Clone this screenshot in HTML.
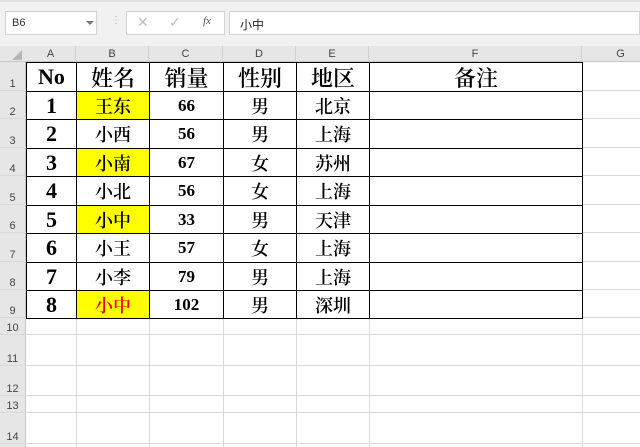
<!DOCTYPE html><html><head><meta charset="utf-8"><style>
*{margin:0;padding:0;box-sizing:border-box}
body{width:640px;height:447px;overflow:hidden;background:#fff;position:relative;font-family:"Liberation Sans",sans-serif}
.a{position:absolute}
.c{position:absolute;display:flex;align-items:center;justify-content:center}
.t{font-family:"Liberation Serif","Noto Serif CJK SC",serif;color:#000}
</style></head><body>
<div class="a" style="left:0;top:0;width:640px;height:46px;background:#f1f1f1"></div>
<div class="a" style="left:0;top:0;width:640px;height:2px;background:#e0e0e0"></div>
<div class="a" style="left:5px;top:11px;width:92px;height:24px;background:#fff;border:1px solid #d4d4d4;font-size:11px;color:#333;padding:5px 0 0 6px">B6</div>
<div class="a" style="left:86px;top:21px;width:0;height:0;border-left:4px solid transparent;border-right:4px solid transparent;border-top:4px solid #777"></div>
<div class="a" style="left:111px;top:15px;color:#aaa;font-size:10px">⋮</div>
<div class="a" style="left:126px;top:11px;width:99px;height:24px;background:#fff;border:1px solid #d4d4d4"></div>
<div class="a" style="left:137px;top:14px;color:#bbb;font-size:14px">✕</div>
<div class="a" style="left:169px;top:14px;color:#bbb;font-size:14px">✓</div>
<div class="a" style="left:203px;top:15px;color:#555;font-size:11px;font-style:italic;font-family:'Liberation Serif',serif">fx</div>
<div class="a" style="left:229px;top:11px;width:411px;height:24px;background:#fff;border:1px solid #d4d4d4;font-size:12px;color:#222;padding:4px 0 0 10px;font-family:'Liberation Sans','Noto Sans CJK SC',sans-serif">小中</div>
<div class="a" style="left:0;top:46px;width:640px;height:16px;background:#e6e6e6;border-bottom:1px solid #c6c6c6"></div>
<div class="a" style="left:0;top:62px;width:26px;height:385px;background:#e6e6e6;border-right:1px solid #c6c6c6"></div>
<div class="a" style="left:12px;top:50px;width:0;height:0;border-left:10px solid transparent;border-bottom:10px solid #b5b5b5"></div>
<div id="g"></div>
<script>
const cols=[26,76,149,223,296,369,582,660],rows=[62,91,119,148,176,205,233,262,290,318,335,366,396,413,444,460];
const L="ABCDEFG";let h="";
for(let i=0;i<7;i++){h+=`<div class="c" style="left:${cols[i]}px;top:46px;width:${cols[i+1]-cols[i]}px;height:16px;font-size:11px;color:#444;border-right:1px solid #d0d0d0">${L[i]}</div>`;}
for(let i=1;i<7;i++)h+=`<div class="a" style="left:${cols[i]}px;top:62px;width:1px;height:385px;background:#d9d9d9"></div>`;
for(let r=0;r<14;r++){h+=`<div class="a" style="left:0;top:${rows[r+1]-1}px;width:640px;height:1px;background:#d9d9d9"></div>`;
h+=`<div class="a" style="left:0;top:${rows[r]}px;width:25px;height:${rows[r+1]-rows[r]}px;font-size:11px;color:#444;display:flex;align-items:flex-end;justify-content:center;padding-bottom:1px">${r+1}</div>`;}
const d=[["No","姓名","销量","性别","地区","备注"],["1","王东","66","男","北京"],["2","小西","56","男","上海"],["3","小南","67","女","苏州"],["4","小北","56","女","上海"],["5","小中","33","男","天津"],["6","小王","57","女","上海"],["7","小李","79","男","上海"],["8","小中","102","男","深圳"]];
const yel=[1,3,5,8];
for(let r=0;r<9;r++){for(let c=0;c<6;c++){let bg="#fff";if(c==1&&yel.includes(r))bg="#ffff00";
let fs=r==0?22:(c==0?22:(c==2?17:18));let col=(r==8&&c==1)?"#e00":"#000";
let num=(c==0||c==2)&&r>0||(r==0&&c==0);let fw=num?"bold":"600";
h+=`<div class="c t" style="left:${cols[c]}px;top:${rows[r]}px;width:${cols[c+1]-cols[c]+1}px;height:${rows[r+1]-rows[r]+1}px;background:${bg};border:1px solid #000;font-size:${fs}px;color:${col};font-weight:${fw}">${d[r][c]||""}</div>`;}}
document.getElementById("g").innerHTML=h;
</script>
</body></html>
